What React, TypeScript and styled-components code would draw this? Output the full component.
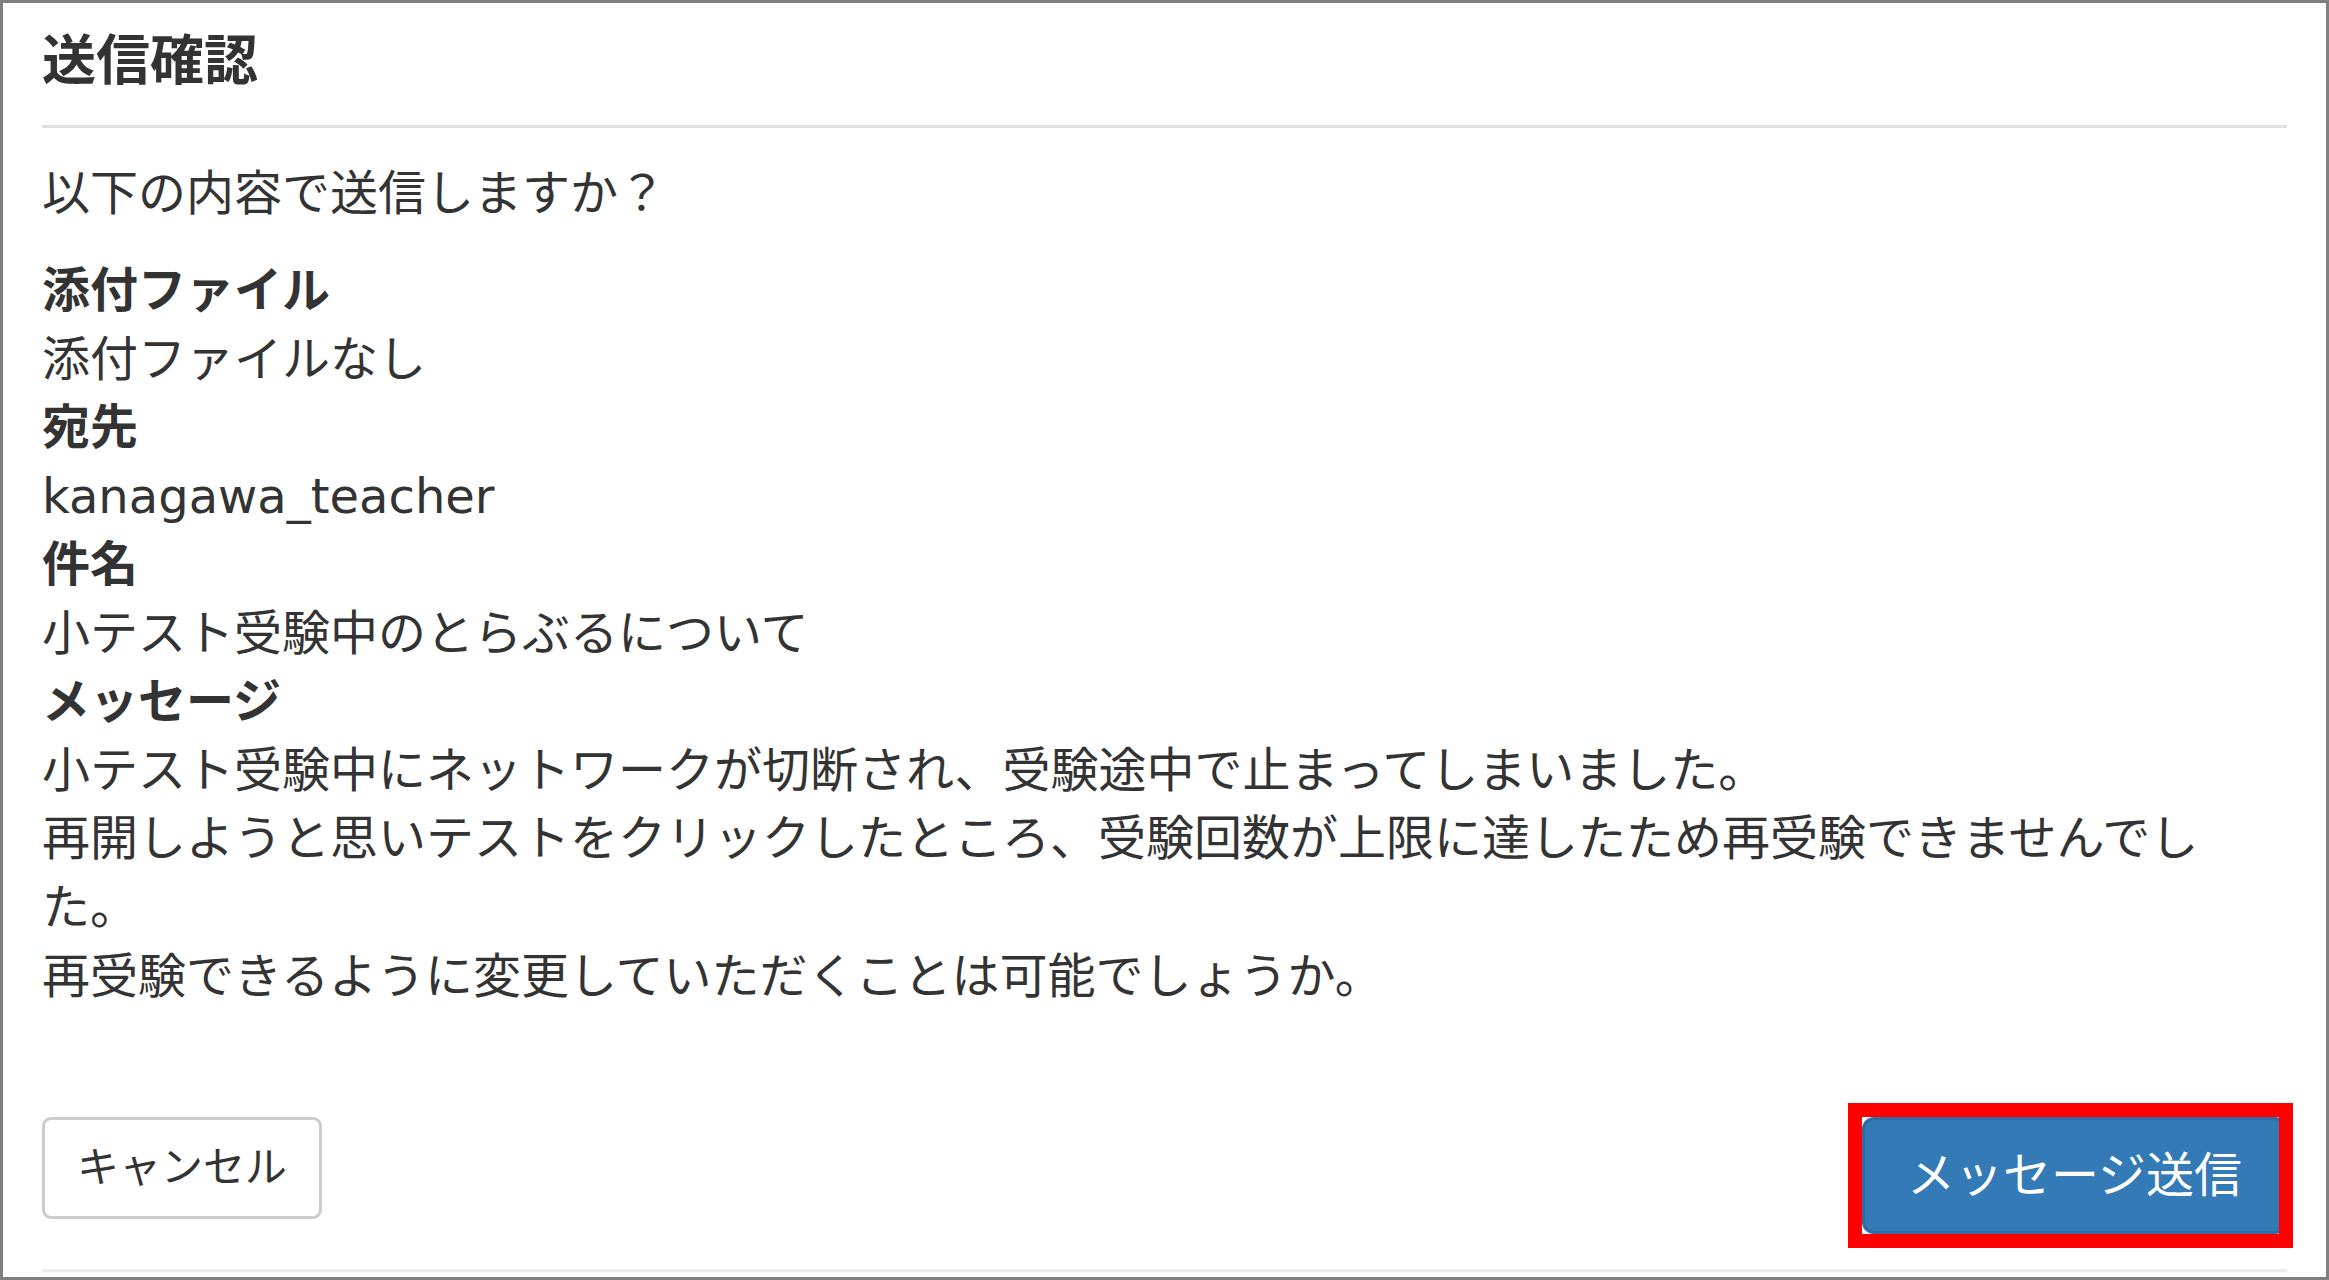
import styled, { createGlobalStyle } from "styled-components";

const GlobalStyle = createGlobalStyle`
  html, body {
    margin: 0;
    padding: 0;
    background: #fff;
  }
  body {
    font-family: "DejaVu Sans", "Noto Sans CJK JP", sans-serif;
    color: #333;
  }
`;

const Dialog = styled.section`
  box-sizing: border-box;
  width: 100%;
  height: 1280px;
  border: 3px solid #808080;
  padding: 0 39px;
  overflow: hidden;
`;
const Header = styled.header`
  padding-top: 29px;
  padding-bottom: 33px;
  border-bottom: 3px solid #e0e0e0;
`;
const Title = styled.h4`
  margin: 0;
  font-size: 54px;
  line-height: 60px;
  font-weight: bold;
  color: #333;
`;
const Body = styled.div`
  padding-top: 31px;
  font-size: 48px;
  line-height: 68.57px;
`;
const Intro = styled.p`
  margin: 0 0 28.4px;
`;
const Label = styled.div`
  font-weight: bold;
`;
const Value = styled.div``;
const Footer = styled.div`
  display: flex;
  justify-content: space-between;
  align-items: flex-start;
  margin-top: 107px;
`;
const Button = styled.button<{ $primary?: boolean }>`
  box-sizing: border-box;
  font-family: inherit;
  cursor: pointer;
  border-style: solid;
  border-width: 3px;
  border-color: ${(p) => (p.$primary ? "#2e6da4" : "#ccc")};
  background: ${(p) => (p.$primary ? "#337ab7" : "#fff")};
  color: ${(p) => (p.$primary ? "#fff" : "#333")};
  font-size: ${(p) => (p.$primary ? "48px" : "42px")};
  line-height: 1.42857;
  padding: ${(p) => (p.$primary ? "21px 42px" : "18px 32px")};
  border-radius: ${(p) => (p.$primary ? "12px" : "9px")};
`;
const Highlight = styled.div`
  position: relative;
  display: flex;
`;
const RedFrame = styled.span`
  position: absolute;
  left: -14px;
  top: -14px;
  right: -6px;
  bottom: -14px;
  border: 14px solid #ff0000;
  pointer-events: none;
`;
const BottomRule = styled.div`
  margin-top: 35px;
  border-top: 3px solid #ececec;
`;

const fields = [
  { label: "添付ファイル", lines: ["添付ファイルなし"] },
  { label: "宛先", lines: ["kanagawa_teacher"] },
  { label: "件名", lines: ["小テスト受験中のとらぶるについて"] },
  {
    label: "メッセージ",
    lines: [
      "小テスト受験中にネットワークが切断され、受験途中で止まってしまいました。",
      "再開しようと思いテストをクリックしたところ、受験回数が上限に達したため再受験できませんでした。",
      "再受験できるように変更していただくことは可能でしょうか。",
    ],
  },
];

export default function App() {
  return (
    <>
      <GlobalStyle />
      <Dialog>
        <Header>
          <Title>送信確認</Title>
        </Header>
        <Body>
          <Intro>以下の内容で送信しますか？</Intro>
          {fields.map((f) => (
            <div key={f.label}>
              <Label>{f.label}</Label>
              {f.lines.map((line, i) => (
                <Value key={i}>{line}</Value>
              ))}
            </div>
          ))}
        </Body>
        <Footer>
          <Button>キャンセル</Button>
          <Highlight>
            <Button $primary>メッセージ送信</Button>
            <RedFrame />
          </Highlight>
        </Footer>
        <BottomRule />
      </Dialog>
    </>
  );
}
